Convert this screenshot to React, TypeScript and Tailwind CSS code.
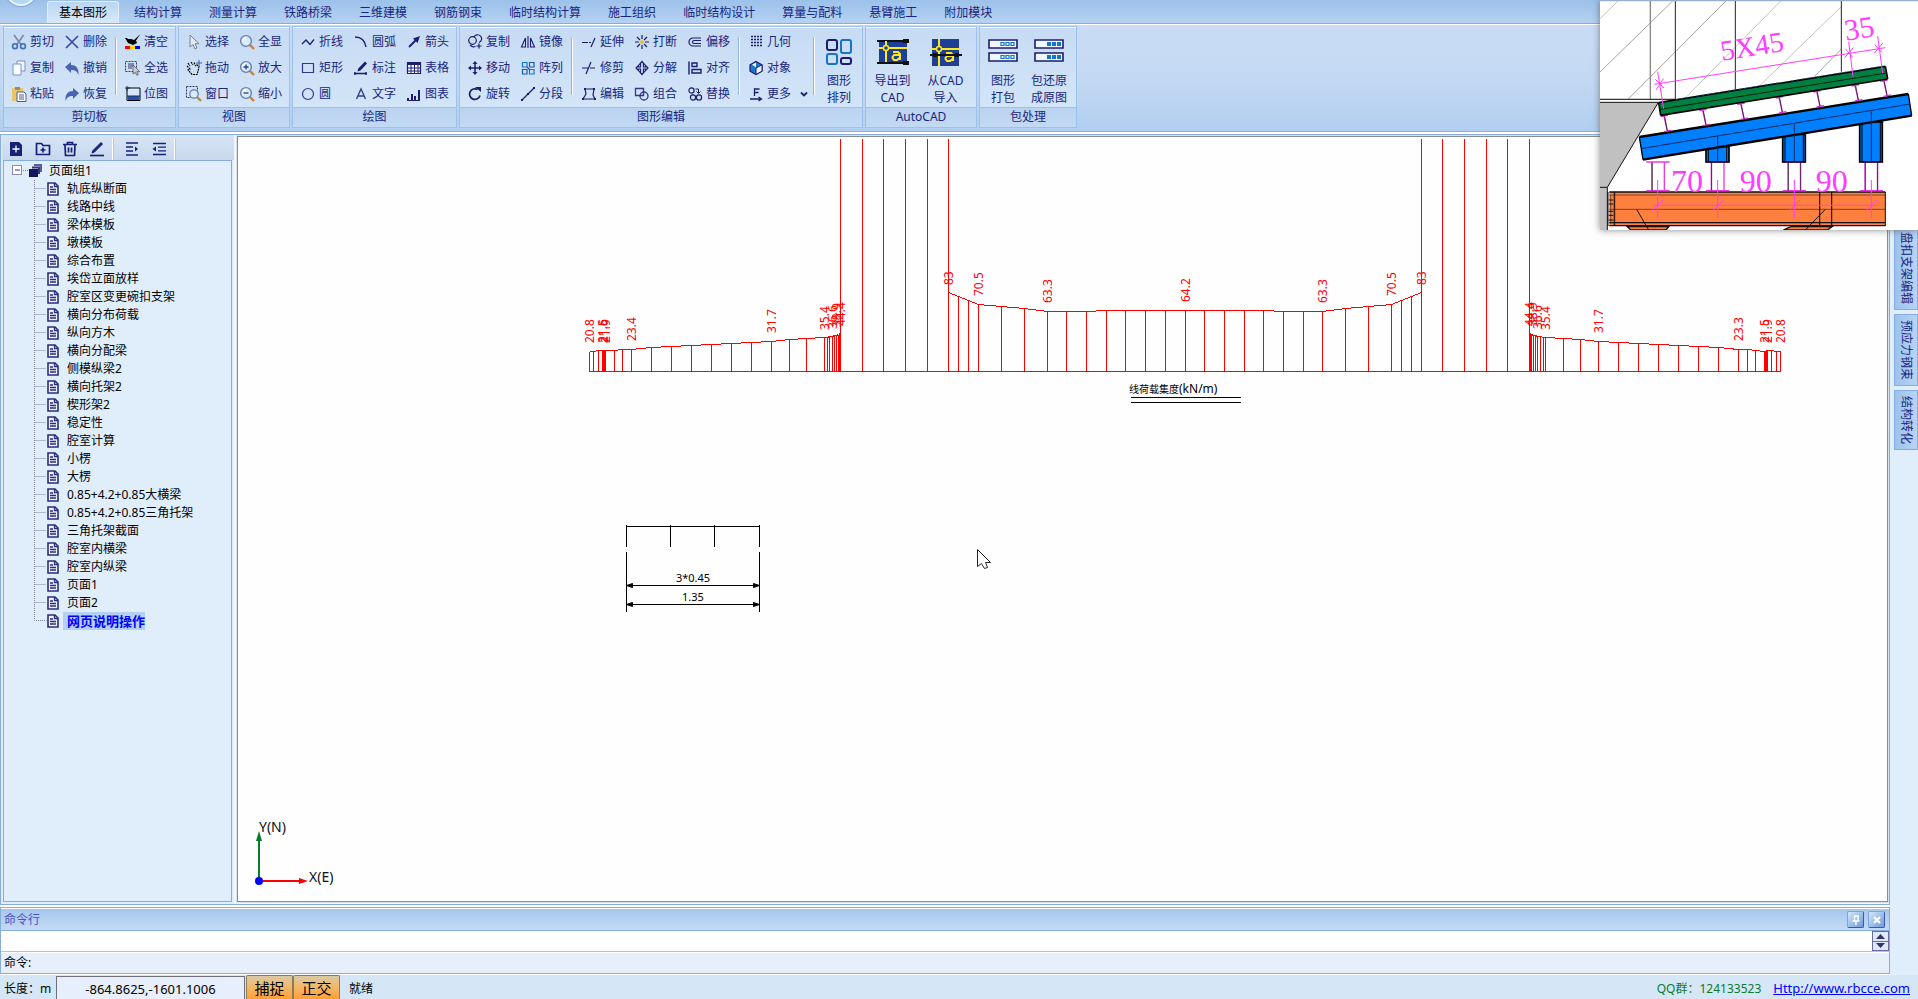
import React from "react";

const NAVY = "#1c1c70";

/* ---------- small 16px icons ---------- */

type IconMap = Record<string, React.ReactNode>;

const lens = (
  <>
    <path d="M11 11l4 4" stroke="#c9813a" strokeWidth="2.4" />
    <circle cx="7" cy="7" r="5.4" stroke="#6a7fb0" strokeWidth="1.4" fill="#d9ecfb" />
    <path d="M4 6.5a3.4 3.4 0 0 1 3-2.8" stroke="#fff" strokeWidth="1.2" />
  </>
);

const ICONS: IconMap = {
  cut: (
    <>
      <path d="M3 1l7 9.5M12.5 1L6 10.5" stroke="#7c8aa8" strokeWidth="1.7" />
      <circle cx="4" cy="12.2" r="2.4" stroke="#3b6fb8" strokeWidth="1.6" />
      <circle cx="12" cy="12.2" r="2.4" stroke="#3b6fb8" strokeWidth="1.6" />
    </>
  ),
  copyDoc: (
    <>
      <path d="M6 1h8v10H6z" fill="#eef5ff" stroke="#7f93c4" />
      <path d="M2 4h8v11H2z" fill="#fbfdff" stroke="#7f93c4" />
    </>
  ),
  paste: (
    <>
      <path d="M1 2h11v13H1z" fill="#e9c766" />
      <path d="M4 1h5v3H4z" fill="#8c8c8c" />
      <path d="M6 6h7l2 2v7.5H6z" fill="#fff" stroke="#4c5a9c" />
      <path d="M8 9h5M8 11h5M8 13h5" stroke="#4c5a9c" />
    </>
  ),
  del: <path d="M2 2l12 12M14 2L2 14" stroke="#34499c" strokeWidth="1.6" />,
  undo: <path d="M1 7l6-5v3c5 0 8 3 7.5 10-1.5-4-3.5-5-7.5-5v3z" fill="#4a64b4" />,
  redo: <path d="M15 7L9 2v3C4 5 1 8 1.5 15 3 11 5 10 9 10v3z" fill="#4a64b4" />,
  clear: (
    <>
      <path d="M15.5 0l-4.5 6.5 1 2.5-4 2-5-2-3-5h2l1 1h3l3 1z" fill="#000" />
      <path d="M0 12h5v3H0z" fill="#f00" />
      <path d="M5 11.5h5V15H5z" fill="#fd0" />
      <path d="M10 12h5v3h-5z" fill="#00f" />
    </>
  ),
  selectAll: (
    <>
      <path d="M.5 1.5h11v10H.5z" stroke="#34346e" strokeDasharray="2 1" />
      <path d="M3 4h6M3 6h6M3 8h4" stroke="#34346e" />
      <path d="M8 5v9l2.200-1.7 1.6 3 1.5-.8-1.5-2.800h3z" fill="#ccd" stroke="#555" strokeWidth=".8" />
    </>
  ),
  bitmap: (
    <>
      <path d="M2 2h13v12.5H2z" fill="#d7e7f9" stroke="#000" />
      <path d="M2.5 10h12v4h-12z" fill="#2653a8" />
      <path d="M0 2h5M2 0v5M2 10h13" stroke="#15305f" />
    </>
  ),
  pick: <path d="M4 1v12l3-2.5 2 4.5 2-1-2-4.300h4z" fill="#e4ebf6" stroke="#7a7f98" />,
  pan: (
    <>
      <path
        d="M2 3l2 3M5 2l2 3M8 2.5l1.5 3M1 6l3 3-2 1 4 4.5h5l1-3 1-5-2-1.5-2 1"
        stroke="#000"
        strokeWidth="1.2"
        strokeDasharray="2 .7"
      />
      <path d="M13 0v6M10 3h6" stroke="#3a5ca8" />
    </>
  ),
  zoomWin: (
    <>
      <path d="M.5 .5h11v11H.5z" stroke="#34346e" strokeDasharray="2 1" />
      <path d="M11 11l4 4" stroke="#c9813a" strokeWidth="2.4" />
      <circle cx="8" cy="8" r="4.2" stroke="#6a7fb0" strokeWidth="1.3" fill="#d9ecfb" />
    </>
  ),
  zoomAll: lens,
  zoomIn: (
    <>
      {lens}
      <path d="M4.5 7h5M7 4.5v5" stroke="#24408c" strokeWidth="1.3" />
    </>
  ),
  zoomOut: (
    <>
      {lens}
      <path d="M4.5 7h5" stroke="#24408c" strokeWidth="1.3" />
    </>
  ),
  polyline: <path d="M2 10l4-4 4 4.5 4-5" stroke={NAVY} strokeWidth="1.3" />,
  rect: <path d="M2.5 3.5h11v9h-11z" stroke="#35358a" strokeWidth="1.2" />,
  circle: <circle cx="8" cy="8" r="5.5" stroke="#35358a" strokeWidth="1.2" />,
  arc: <path d="M2 3c6 0 10 4 11 10" stroke={NAVY} strokeWidth="1.4" />,
  mark: (
    <>
      <path d="M12 1.5l2 2-6.5 7-3 1 .8-3z" fill={NAVY} />
      <path d="M1 13.5h13M2 12v3M13 12v3" stroke={NAVY} strokeWidth="1.3" />
    </>
  ),
  letterA: <path d="M3.5 13L8 3l4.5 10M5 10h6" stroke="#35408c" strokeWidth="1.4" />,
  arrow: (
    <>
      <path d="M3 13l7-7" stroke={NAVY} strokeWidth="1.8" />
      <path d="M14 2l-7 2.5L11.5 9z" fill={NAVY} />
    </>
  ),
  table: (
    <>
      <path d="M1.5 2.5h13v11h-13z" fill="#fff" stroke={NAVY} strokeWidth="1.2" />
      <path d="M1 2h14v3H1z" fill={NAVY} />
      <path d="M5 5v9M8.5 5v9M12 5v9M1 8h14M1 11h14" stroke={NAVY} />
    </>
  ),
  bars: <path d="M1 12h2v2H1zM5 8h2v6H5zM8 10h2v4H8zM12 4h2v10h-2zM1 14h13v1H1z" fill={NAVY} />,
  copyC: (
    <>
      <circle cx="5.5" cy="6.5" r="3.8" stroke={NAVY} strokeWidth="1.2" />
      <path d="M7 3a4 4 0 1 1 5 5.5M9.5 12h5M12 9.5v5M3 11c2 2 4 2 5.5 1.5" stroke={NAVY} strokeWidth="1.2" />
    </>
  ),
  move: (
    <>
      <path d="M8 2v12M2 8h12" stroke={NAVY} strokeWidth="1.5" />
      <path d="M8 1l2.500 3h-5zM8 15l2.500-3h-5zM1 8l3-2.500v5zM15 8l-3-2.500v5z" fill={NAVY} />
    </>
  ),
  rotate: (
    <>
      <path d="M10.5 3.5A5.3 5.3 0 1 0 13 9.5" stroke={NAVY} strokeWidth="1.7" />
      <path d="M8 1h6v5z" fill={NAVY} />
    </>
  ),
  mirror: <path d="M5.5 4v9H1.5zM10.5 4v9h4zM8 2v12" stroke={NAVY} strokeWidth="1.1" />,
  array: (
    <>
      <path d="M2.5 2.5h4.5v4.5h-4.5zM9.5 9.5H14V14H9.5z" stroke="#1976c8" strokeWidth="1.2" />
      <path d="M9.5 2.5H14V7H9.5zM2.5 9.5H7V14H2.5zM7 7l3 3" stroke="#1a5aa8" strokeWidth="1.2" />
    </>
  ),
  segment: (
    <>
      <path d="M2 14L14 2" stroke={NAVY} strokeWidth="1.3" />
      <path d="M1 13h2v2H1zM7 7h2v2H7zM13 1h2v2h-2z" fill={NAVY} />
    </>
  ),
  extend: <path d="M1 8.5h6M8 8.5h2M10 13l4-9" stroke={NAVY} strokeWidth="1.2" />,
  trim: <path d="M1 8h6M9 8h5M5 14L10 2" stroke={NAVY} strokeWidth="1.2" />,
  edit: (
    <>
      <path d="M4 3h9l-1 6 2 4H2l3-5z" stroke={NAVY} strokeWidth="1.2" />
      <path d="M3 2h2v2H3zM12 2h2v2h-2zM1 12h2v2H1zM13 12h2v2h-2z" fill={NAVY} />
    </>
  ),
  brk: (
    <>
      <path d="M8 1v4M8 11v4M1 8h4M11 8h4M3 3l3 3M13 3l-3 3M3 13l3-3M13 13l-3-3" stroke={NAVY} strokeWidth="1.2" />
      <circle cx="8" cy="8" r="1.8" fill="#f5b800" />
    </>
  ),
  explode: (
    <path
      d="M8 1.5l2.500 3H9.5V7h2V5.500l2.500 2.500-2.500 2.500V9h-2v2.500h1L8 14.500l-2.500-3h1V9h-2v1.500L2 8l2.500-2.500V7h2V4.500h-1z"
      stroke={NAVY}
      strokeWidth="1.2"
    />
  ),
  combine: (
    <>
      <path d="M1.5 2.5h8v7h-8z" stroke="#35358a" strokeWidth="1.3" />
      <circle cx="10" cy="10" r="4" stroke="#35358a" strokeWidth="1.3" />
    </>
  ),
  offset: <path d="M14 4H6a4 4 0 0 0 0 8h8M14 6.500H7a1.5 1.5 0 0 0 0 3h7" stroke={NAVY} strokeWidth="1.2" />,
  align: <path d="M2 1.5v13M5 3h5v3.5H5zM5 9.5h9V13H5z" stroke={NAVY} strokeWidth="1.4" />,
  replace: (
    <>
      <circle cx="4.5" cy="4.5" r="2.6" stroke={NAVY} strokeWidth="1.2" />
      <circle cx="6" cy="11.5" r="2.6" stroke={NAVY} strokeWidth="1.2" />
      <circle cx="12" cy="11.5" r="2.6" stroke={NAVY} strokeWidth="1.2" />
      <path d="M8.5 3h3v4M9.5 5.5l2 2 2-2" stroke={NAVY} />
    </>
  ),
  geometry: (
    <path
      d="M3 2.5h11M3 5.5h2M6 5.5h2M9 5.5h2M12 5.5h2M3 8.500h2M6 8.500h2M9 8.500h2M12 8.500h2M3 11.500h2M6 11.500h2M9 11.500h2M12 11.500h2"
      stroke={NAVY}
      strokeWidth="1.4"
      strokeDasharray="2 1"
    />
  ),
  object: (
    <>
      <path d="M8 1.5l6 3.300v6.400l-6 3.300-6-3.300V4.800z" fill="#1a78cc" stroke={NAVY} strokeWidth="1.2" />
      <path d="M8 8l6-3.200v6.400l-6 3.300z" fill="#e9f4ff" stroke={NAVY} />
      <path d="M4 4.500L8 2.500v5z" fill="#e9f4ff" />
    </>
  ),
  more: <path d="M6.5 10V3h5M6.5 6.5h4M2 13h11M10.5 11l3 2-3 2" stroke={NAVY} strokeWidth="1.3" />,
};

function Icon({ name }: { name: string }) {
  return (
    <svg className="size-4 shrink-0" viewBox="0 0 16 16" fill="none" aria-hidden="true">
      {ICONS[name]}
    </svg>
  );
}

/* ---------- ribbon ---------- */

type Item = [icon: string, label: string];

function ToolColumn({ items, wide }: { items: Item[]; wide?: boolean }) {
  return (
    <div className={wide ? "flex w-[67px] flex-col" : "flex w-[53px] flex-col"}>
      {items.map(([icon, label]) => (
        <button key={label} type="button" className="flex h-[26px] items-center gap-[3px] pl-[7px] text-left">
          <Icon name={icon} />
          <span className="whitespace-nowrap">{label}</span>
          {label === "更多" && (
            <svg className="ml-[6px] h-2 w-2 shrink-0" viewBox="0 0 8 8" fill="none" aria-hidden="true">
              <path d="M1 2.5L4 5.5l3-3" stroke={NAVY} strokeWidth="1.8" />
            </svg>
          )}
        </button>
      ))}
    </div>
  );
}

function Divider() {
  return (
    <div className="flex w-2 justify-center pt-2 pb-3 pl-[3px]">
      <span className="w-[2px] border-l border-[#8fb4e4] bg-white" />
    </div>
  );
}

function BigButton({ lines, wide, children }: { lines: [string, string]; wide?: boolean; children: React.ReactNode }) {
  return (
    <button
      type="button"
      className={wide ? "flex w-[53px] flex-col items-center pt-[7px]" : "flex w-[46px] flex-col items-center pt-[7px]"}
    >
      <svg className="h-8 w-8" viewBox="0 0 32 32" fill="none" aria-hidden="true">
        {children}
      </svg>
      <span className="mt-1 whitespace-nowrap leading-[17px]">
        {lines[0]}
        <br />
        {lines[1]}
      </span>
    </button>
  );
}

function Group({ title, children, padded = true }: { title: string; children: React.ReactNode; padded?: boolean }) {
  return (
    <section
      aria-label={title}
      className="flex shrink-0 flex-col border border-[#9dc0ec] bg-linear-to-b from-[#c6dbf4] to-[#d6e7f8]"
    >
      <div className={padded ? "flex h-[81px] border-t border-white pt-[1px] pr-1" : "flex h-[81px] border-t border-white pt-[1px]"}>
        {children}
      </div>
      <h2 className="h-5 border-t border-[#9dc0ec] bg-linear-to-b from-[#bad3f0] to-[#c2daf4] text-center leading-[18px]">
        {title}
      </h2>
    </section>
  );
}

const TABS = [
  "基本图形", "结构计算", "测量计算", "铁路桥梁", "三维建模", "钢筋钢束", "临时结构计算",
  "施工组织", "临时结构设计", "算量与配料", "悬臂施工", "附加模块",
];

function Ribbon() {
  return (
    <header className="text-[#18267e]">
      <nav className="relative flex h-6 items-end gap-[3px] overflow-hidden border-b border-[#86ade0] bg-linear-to-b from-[#9cc1ea] to-[#b5d2f1] pl-[47px]">
        <span className="absolute -top-[26px] left-[5px] size-8 rounded-full border-2 border-[#e8f4ff] bg-[#b7d8f3] shadow-[0_0_1px_1px_#7fa8d8]" />
        {TABS.map((t, i) => (
          <button
            key={t}
            type="button"
            className={
              i === 0
                ? "h-[22px] rounded-t-[3px] border border-b-0 border-[#e4effb] bg-linear-to-b from-[#b9d6f3] to-[#d9e9fa] px-[11px] leading-[22px] text-black"
                : "h-[22px] px-3 leading-[24px]"
            }
          >
            {t}
          </button>
        ))}
      </nav>
      <div className="flex h-[108px] gap-[2px] border-t border-b border-t-white border-b-[#86ade0] bg-linear-to-b from-[#cadcf5] via-[#c3d9f3] to-[#b2ceef] pt-[1px] pb-[3px] pl-[3px]">
        <Group title="剪切板">
          <ToolColumn items={[["cut", "剪切"], ["copyDoc", "复制"], ["paste", "粘贴"]]} />
          <ToolColumn items={[["del", "删除"], ["undo", "撤销"], ["redo", "恢复"]]} />
          <Divider />
          <ToolColumn items={[["clear", "清空"], ["selectAll", "全选"], ["bitmap", "位图"]]} />
        </Group>
        <Group title="视图">
          <ToolColumn items={[["pick", "选择"], ["pan", "拖动"], ["zoomWin", "窗口"]]} />
          <ToolColumn items={[["zoomAll", "全显"], ["zoomIn", "放大"], ["zoomOut", "缩小"]]} />
        </Group>
        <Group title="绘图">
          <ToolColumn items={[["polyline", "折线"], ["rect", "矩形"], ["circle", "圆"]]} />
          <ToolColumn items={[["arc", "圆弧"], ["mark", "标注"], ["letterA", "文字"]]} />
          <ToolColumn items={[["arrow", "箭头"], ["table", "表格"], ["bars", "图表"]]} />
        </Group>
        <Group title="图形编辑" padded={false}>
          <ToolColumn items={[["copyC", "复制"], ["move", "移动"], ["rotate", "旋转"]]} />
          <ToolColumn items={[["mirror", "镜像"], ["array", "阵列"], ["segment", "分段"]]} />
          <Divider />
          <ToolColumn items={[["extend", "延伸"], ["trim", "修剪"], ["edit", "编辑"]]} />
          <ToolColumn items={[["brk", "打断"], ["explode", "分解"], ["combine", "组合"]]} />
          <ToolColumn items={[["offset", "偏移"], ["align", "对齐"], ["replace", "替换"]]} />
          <Divider />
          <ToolColumn wide items={[["geometry", "几何"], ["object", "对象"], ["more", "更多"]]} />
          <Divider />
          <BigButton lines={["图形", "排列"]}>
            <rect x="4" y="4" width="10" height="10" rx="2" stroke={NAVY} strokeWidth="2" />
            <rect x="18" y="4" width="10" height="13" rx="2" stroke="#1673c6" strokeWidth="2" />
            <rect x="4" y="18" width="10" height="10" rx="2" stroke="#1673c6" strokeWidth="2" />
            <rect x="18" y="22" width="10" height="6" rx="2" stroke={NAVY} strokeWidth="2" />
          </BigButton>
        </Group>
        <Group title="AutoCAD">
          <BigButton wide lines={["导出到", "CAD"]}>
            <rect x="2" y="5" width="28" height="22" fill="#1f3f94" />
            <path d="M0 5h28M0 27h28" stroke="#111" strokeWidth="2" />
            <path d="M26 3h6v4h-6zM26 25h6v4h-6z" fill="#111" />
            <path d="M2 12h5M11 12h19M9 5v5M9 14v12" stroke="#ffe81a" strokeWidth="2" />
            <circle cx="9" cy="12" r="2.5" stroke="#ffe81a" strokeWidth="1.5" />
            <path d="M16 16h5l2 2v6M22 19h-5l-1.5 2v1l1.5 2h3l2.5-2" stroke="#ffe81a" strokeWidth="2" />
          </BigButton>
          <BigButton wide lines={["从CAD", "导入"]}>
            <rect x="2" y="3" width="27" height="27" fill="#1f3f94" />
            <path d="M2 13h5M11 13h18M9 3v8M9 15v15" stroke="#ffe81a" strokeWidth="2" />
            <circle cx="9" cy="13" r="2.5" stroke="#ffe81a" strokeWidth="1.5" />
            <path d="M16 17h5l2 2v6M22 20h-5l-1.5 2v1l1.5 2h3l2.5-2" stroke="#ffe81a" strokeWidth="2" />
            <path d="M0 19h32" stroke="#111" strokeWidth="2" />
            <path d="M3 17h4v4H3zM25 17h4v4h-4z" fill="#111" />
          </BigButton>
        </Group>
        <Group title="包处理">
          <BigButton lines={["图形", "打包"]}>
            <path d="M2 4h28v8H2zM2 17h28v8H2z" fill="#eef6ff" stroke={NAVY} strokeWidth="1.6" />
            <path
              d="M14 6.5h3v3h-3zM19 6.5h3v3h-3zM24 6.5h3v3h-3zM14 19.5h3v3h-3zM19 19.5h3v3h-3zM24 19.5h3v3h-3z"
              stroke="#1673c6"
              strokeWidth="1.2"
            />
          </BigButton>
          <BigButton lines={["包还原", "成原图"]}>
            <path d="M2 4h28v8H2zM2 17h28v8H2z" fill="#eef6ff" stroke={NAVY} strokeWidth="1.6" />
            <path
              d="M14 6h4v4h-4zM19 6h4v4h-4zM24 6h4v4h-4zM14 19h4v4h-4zM19 19h4v4h-4zM24 19h4v4h-4z"
              fill="#1673c6"
            />
          </BigButton>
        </Group>
      </div>
    </header>
  );
}

/* ---------- page tree ---------- */

const PAGES = [
  "轨底纵断面", "线路中线", "梁体模板", "墩模板", "综合布置", "埃岱立面放样", "腔室区变更碗扣支架",
  "横向分布荷载", "纵向方木", "横向分配梁", "侧模纵梁2", "横向托架2", "楔形架2", "稳定性", "腔室计算",
  "小楞", "大楞", "0.85+4.2+0.85大横梁", "0.85+4.2+0.85三角托架", "三角托架截面", "腔室内横梁",
  "腔室内纵梁", "页面1", "页面2", "网页说明操作",
];

function PageIcon() {
  return (
    <svg className="h-[14px] w-3 shrink-0" viewBox="0 0 12 14" fill="none" aria-hidden="true">
      <path d="M1 1h7l3 3v9H1z" fill="#eef2fb" stroke="#2c2c7c" strokeWidth="1.6" />
      <path d="M7.5 1v3.5H11M3 5h3M3 7.5h6M3 10h6" stroke="#2c2c7c" strokeWidth="1.3" />
    </svg>
  );
}

function TreeToolButton({ label, children }: { label: string; children: React.ReactNode }) {
  return (
    <button type="button" aria-label={label} className="flex w-[27px] items-center justify-center">
      <svg className="size-4" viewBox="0 0 16 16" fill="none" stroke="#16227a" strokeWidth="1.7" aria-hidden="true">
        {children}
      </svg>
    </button>
  );
}

function PagePanel() {
  return (
    <aside className="flex w-[233px] shrink-0 flex-col bg-[#e0edfb] pl-[1px]">
      <div className="flex h-[25px] items-stretch bg-linear-to-b from-[#d6e4f6] to-[#c8d8ec] pt-[3px]">
        <TreeToolButton label="新建页面">
          <path d="M2 1h9l3 3v11H2z" fill="#16227a" stroke="none" />
          <path d="M8 4.5v7M4.5 8h7" stroke="#fff" strokeWidth="1.3" />
        </TreeToolButton>
        <TreeToolButton label="新建页面组">
          <path d="M1.5 2.5h5l1.5 2h6.5v9h-13zM8 6.5v5M5.5 9h5" />
        </TreeToolButton>
        <TreeToolButton label="删除页面">
          <path d="M1 3.5h14M5.5 3V1.5h5V3M3 4l.5 10.5h9L13 4M6.5 6.5v5M9.5 6.5v5" />
        </TreeToolButton>
        <TreeToolButton label="重命名">
          <path d="M3 12l1-2.5L12 1.5l1.5 1.5-8 8z" fill="#16227a" strokeWidth="1" />
          <path d="M1 14.5h14" />
        </TreeToolButton>
        <span className="mr-1 ml-[2px] w-[2px] border-l border-white bg-[#b4c8e4]" />
        <TreeToolButton label="展开">
          <path d="M2 2h12M2 6h7M2 10h7M2 14h12" />
          <path d="M11 5.5l3 2.5-3 2.5z" fill="#16227a" stroke="none" />
        </TreeToolButton>
        <TreeToolButton label="收起">
          <path d="M2 2.5h13M7 6.2h8M7 9.8h8M2 13.5h13" strokeWidth="1.3" />
          <path d="M5 5.5L1.5 8 5 10.5z" fill="#16227a" stroke="none" />
        </TreeToolButton>
        <span className="ml-[2px] w-[2px] border-l border-white bg-[#b4c8e4]" />
      </div>
      <div className="mr-[2px] mb-[2px] ml-[1px] min-h-0 flex-1 overflow-hidden border border-[#86ade0] bg-[#e0eefc]">
        <div className="flex h-[19px] items-center pt-[1px] pl-2">
          <svg className="h-[18px] w-[31px] shrink-0" viewBox="0 0 31 18" fill="none" aria-hidden="true">
            <rect x=".5" y="3.5" width="9" height="9" fill="#fff" stroke="#8a8ab8" />
            <path d="M3 8h5" stroke="#3a3a9a" />
            <path d="M11 8.5h6" stroke="#8080a0" strokeDasharray="1 1" />
            <path d="M22 2h8v8h-2V4h-6z" fill="#5a5a9e" />
            <path d="M20 4.5h8V12h-2V6.5h-6z" fill="#35357e" />
            <path d="M17 7h9v8h-9z" fill="#15155c" />
          </svg>
          <span className="ml-[6px]">页面组1</span>
        </div>
        <ul className="pl-[30px]">
          {PAGES.map((p, i) => {
            const last = i === PAGES.length - 1;
            return (
              <li key={p} className="flex h-[18px] items-center">
                <svg className="h-[18px] w-[13px] shrink-0" viewBox="0 0 13 18" fill="none" aria-hidden="true">
                  <path d={last ? "M.5 0v8.5h12" : "M.5 0v18M.5 8.5h12"} stroke="#8080a0" strokeDasharray="1 1" />
                </svg>
                <PageIcon />
                <a
                  href="#page"
                  className={
                    last
                      ? "ml-1 h-[18px] bg-[#b3d1f3] pl-1 text-[13px] leading-[18px] font-bold text-[#0000ff]"
                      : "ml-1 h-[18px] pl-1 leading-[18px]"
                  }
                >
                  {p}
                </a>
              </li>
            );
          })}
        </ul>
      </div>
    </aside>
  );
}

/* ---------- drawing ---------- */

const BASE = 371;

const PROFILE_LEFT: [number, number][] = [
  [589, 351], [593, 351], [598, 350], [602, 350], [603, 350], [604, 350], [605, 350], [614, 350], [622, 349],
  [631, 349], [651, 347], [671, 346], [691, 345], [711, 344], [731, 343], [751, 342], [771, 341], [789, 339],
  [806, 338], [824, 337], [827, 337], [829, 336], [832, 336], [834, 335], [836, 335], [838, 334], [839, 333], [840, 332],
];
const PROFILE_MID: [number, number][] = [
  [948, 292], [958, 296], [968, 300], [978, 304], [1001, 306], [1024, 308], [1047, 311], [1066, 311], [1086, 311],
  [1106, 310], [1125, 310], [1145, 310], [1165, 310], [1185, 310], [1204, 310], [1224, 310], [1244, 310],
  [1263, 310], [1283, 311], [1303, 311], [1322, 311], [1345, 308], [1368, 306], [1391, 304], [1401, 300],
  [1411, 296], [1421, 292],
];
const PROFILE_RIGHT: [number, number][] = [
  [1529, 332], [1530, 333], [1531, 334], [1533, 335], [1535, 335], [1537, 336], [1540, 336], [1543, 337], [1545, 337],
  [1563, 338], [1580, 339], [1598, 341], [1618, 342], [1638, 343], [1658, 344], [1678, 345], [1698, 346],
  [1718, 347], [1738, 349], [1747, 349], [1755, 350], [1764, 351], [1765, 351], [1766, 350], [1767, 350],
  [1771, 350], [1776, 351], [1780, 351],
];
const TALL = [840, 862, 883, 905, 927, 948, 1421, 1442, 1464, 1486, 1507, 1529];

const LOADS: [number, number, string][] = [
  [589, 343, "20.8"], [602, 343, "21.5"], [603, 343, "21.6"], [605, 343, "21.9"], [631, 341, "23.4"],
  [771, 333, "31.7"], [824, 330, "35.4"], [832, 329, "36.6"], [836, 327, "38.9"], [840, 326, "44.4"],
  [948, 285, "83"], [978, 296, "70.5"], [1047, 303, "63.3"], [1185, 302, "64.2"], [1322, 303, "63.3"],
  [1391, 296, "70.5"], [1421, 285, "83"], [1529, 326, "44.4"], [1532, 326, "38.9"], [1537, 329, "36.6"],
  [1545, 330, "35.4"], [1598, 333, "31.7"], [1738, 341, "23.3"], [1764, 343, "21.5"], [1767, 343, "21.9"],
  [1780, 343, "20.8"],
];

function Profile({ pts }: { pts: [number, number][] }) {
  return (
    <>
      <polyline points={pts.map((p) => p.join(",")).join(" ")} />
      {pts.map(([x, y]) => (
        <path key={x} d={`M${x} ${y}V${BASE}`} />
      ))}
    </>
  );
}

function Canvas() {
  return (
    <main className="relative mt-[1px] mr-[1px] mb-[2px] ml-[3px] min-w-0 flex-1 overflow-hidden border border-[#8c8c8c] bg-[#fefefe] shadow-[0_0_0_1px_#d8e0ea]">
      <svg className="h-full w-full" fill="none" role="img" aria-label="线荷载集度">
        <g transform="translate(-238 -137)">
          <g transform="translate(.5 .5)">
            <g stroke="#f00" shapeRendering="crispEdges">
              <Profile pts={PROFILE_LEFT} />
              <Profile pts={PROFILE_MID} />
              <Profile pts={PROFILE_RIGHT} />
              <path d={`M589 ${BASE}H1780`} />
              {TALL.map((x) => (
                <path key={x} d={`M${x} 138V${BASE}`} />
              ))}
            </g>
            <g stroke="#000" shapeRendering="crispEdges">
              <path d="M1130 397H1240M1130 402H1240" />
              <path d="M626 526H759M626 524V546M670 524V546M714 524V546M759 524V546" />
              <path d="M626 551V611M759 551V611M626 585H759M626 604H759" />
            </g>
            <path
              d="M626 585l6-2v4zM759 585l-6-2v4zM626 604l6-2v4zM759 604l-6-2v4z"
              fill="#000"
              stroke="#000"
            />
            <path d="M977 549v17l4-3 3 5 3-1-2-5h5z" fill="#fff" stroke="#222" />
          </g>
          <g fill="#f00" fontSize="12">
            {LOADS.map(([x, y, t]) => (
              <text key={x} transform={`translate(${x + 5} ${y}) rotate(-90)`}>
                {t}
              </text>
            ))}
          </g>
          <g fill="#000">
            <text x="1129" y="393" fontSize="10">
              线荷载集度<tspan fontSize="12">(kN/m)</tspan>
            </text>
            <text x="693" y="582" fontSize="11" textAnchor="middle">3*0.45</text>
            <text x="693" y="601" fontSize="11" textAnchor="middle">1.35</text>
          </g>
        </g>
      </svg>
      <svg className="absolute bottom-0 left-0 h-[90px] w-[120px]" viewBox="0 0 120 90" fill="none" aria-hidden="true">
        <path d="M21 70V28" stroke="#0a7a2c" strokeWidth="2" />
        <path d="M21 20l3 10h-6z" fill="#0a7a2c" />
        <path d="M21 70h42" stroke="#f00" strokeWidth="2" />
        <path d="M70 70l-9-3v6z" fill="#f00" />
        <circle cx="21" cy="70" r="4" fill="#00f" />
        <text x="21" y="21" fontSize="14" fill="#111">Y(N)</text>
        <text x="71" y="71" fontSize="14" fill="#111">X(E)</text>
      </svg>
    </main>
  );
}

/* ---------- floating detail picture ---------- */

function Stub({ x }: { x: number }) {
  return (
    <path
      d={`M${x - 35} 486h70M${x - 35} 572h70M${x - 19} 488v84M${x + 19} 488v84`}
      stroke="#e83ae8"
      strokeWidth="4"
    />
  );
}

function Detail() {
  const rungs: [number, number][] = [
    [222, 348], [338, 330], [452, 311], [567, 292], [680, 274], [795, 256], [881, 242],
  ];
  return (
    <figure className="absolute top-0 right-0 h-[230px] w-[318px] overflow-hidden bg-white shadow-[0_0_7px_rgba(60,60,60,0.6)]">
      <svg className="h-full w-full" viewBox="30 0 954 690" fill="none" role="img" aria-label="支架大样">
        <path d="M30 216L248 3M114 298L408 3" stroke="#777" strokeWidth="2" />
        <path d="M285 295L572 3M30 56L84 3M500 266L754 20" stroke="#c4c4c4" strokeWidth="3" />
        <path d="M675 228L754 147" stroke="#777" strokeWidth="2" />
        <path d="M181 3V298" stroke="#888" strokeWidth="4" />
        <path d="M256 3V298M436 3V268M754 3V215" stroke="#222" strokeWidth="3" />
        <path d="M30 298H256" stroke="#333" strokeWidth="4" />
        <path d="M30 307H205L52 562V690H30z" fill="#c0c0c0" />
        <path d="M30 307H205L52 562M30 562H52V690" stroke="#111" strokeWidth="3" />

        <path d="M58 576H886V678H58z" fill="#ff7f3f" />
        <path d="M58 576H886M58 668H886M58 677H886" stroke="#111" strokeWidth="4" />
        <path d="M58 585H886M58 628H886M72 576V678M62 585V672M689 576V678M725 576V678" stroke="#4a2414" strokeWidth="2" />
        <path d="M54 576v102M74 576v102M689 576v102M725 576v102M886 576v102" stroke="#111" strokeWidth="3" />
        <path d="M56 600h14M56 612h14M56 634h14M56 646h14M56 660h14" stroke="#111" strokeWidth="3" />
        <path d="M112 680H236L228 690H122zM602 680H726L712 690H580z" fill="#ff7f3f" stroke="#111" strokeWidth="4" />
        <path d="M140 628L176 690M706 628L646 690" stroke="#111" strokeWidth="3" />

        <Stub x={204} />
        <Stub x={383} />
        <Stub x={613} />
        <Stub x={844} />
        <path d="M187 488v84M365 488v84M595 488v84M631 488v84M826 488v84M862 488v84" stroke="#111" strokeWidth="2" />

        <path d="M348 440h69v46h-69zM578 403h68v83h-68zM809 366h68v120h-68z" fill="#0080ff" stroke="#000" strokeWidth="5" />
        <path d="M355 440v46M410 440v46M585 403v83M640 403v83M816 366v120M871 366v120" stroke="#000" strokeWidth="3" />
        <path d="M148 411L955 282L965 347L159 479z" fill="#0080ff" />
        <path d="M148 411L955 282M965 347L159 479" stroke="#000" strokeWidth="7" />
        <path d="M148 411l11 68M955 282l10 65" stroke="#000" strokeWidth="4" />
        <path d="M153 446L960 312M383 406v80M613 370v116M844 334v152" stroke="#0a2a60" strokeWidth="3" />

        {rungs.map(([x, y]) => (
          <path key={x} d={`M${x} ${y}l10 45M${x - 10} ${y + 2}l22-4M${x} ${y + 47}l22-4`} stroke="#d632d6" strokeWidth="4" />
        ))}
        {rungs.map(([x, y]) => (
          <path key={x} d={`M${x + 2} ${y + 2}l8 42`} stroke="#111" strokeWidth="2" />
        ))}

        <path d="M206 308L886 199L893 237L212 346z" fill="#008040" />
        <path d="M206 308L886 199M893 237L212 346M206 308l6 38M886 199l7 38" stroke="#000" strokeWidth="5" />
        <path d="M256 299L886 197" stroke="#1a60b0" strokeWidth="2" strokeDasharray="8 8" />
        <path d="M210 328L890 219" stroke="#021" strokeWidth="3" />

        <g stroke="#ff3cff" strokeWidth="3">
          <path d="M193 253L886 143M203 215L221 326M776 125L789 230M863 108L878 220" />
          <path d="M198 270L220 236M196 238L222 264M764 173L790 143M766 146L788 172M852 160L878 130M854 134L876 158" />
          <path d="M188 616H862M203 540V654M383 540V654M613 540V654M844 540V654" />
          <path d="M186 632L220 600M368 632L400 600M597 632L630 600M828 632L860 600" />
        </g>
        <g fill="#ff3cff" fontSize="96" className="font-[Liberation_Serif,serif]">
          <text x="243" y="577">70</text>
          <text x="449" y="577">90</text>
          <text x="677" y="577">90</text>
          <text transform="translate(396 182) rotate(-9)" fontSize="86">5X45</text>
          <text transform="translate(768 122) rotate(-9)" fontSize="90">35</text>
        </g>
        <path d="M30 2H984" stroke="#7f9fc8" strokeWidth="3" />
      </svg>
    </figure>
  );
}

/* ---------- command dock and status bar ---------- */

function CommandDock() {
  const dockButton =
    "flex size-[17px] items-center justify-center rounded-[2px] border border-[#7fa3dc] border-r-[#3f57a8] border-b-[#3f57a8] bg-linear-to-br from-[#d3e8fb] to-[#6d9bd8]";
  return (
    <section aria-label="命令行" className="mt-[2px] border border-[#86ade0] bg-[#e7effb]">
      <div className="flex h-[22px] items-center border-t border-white bg-linear-to-b from-[#a6c7ee] to-[#c4daf5] pr-1 pl-[3px]">
        <h2 className="flex-1 text-[#4a50bc]">命令行</h2>
        <div className="flex gap-1">
          <button type="button" aria-label="固定" className={dockButton}>
            <svg className="size-3" viewBox="0 0 12 12" fill="none" stroke="#fff" strokeWidth="1.4" aria-hidden="true">
              <path d="M4 2h5M4.5 2v5M8 2v5M2.5 7h7M6 7v4" />
            </svg>
          </button>
          <button type="button" aria-label="关闭" className={dockButton}>
            <svg className="size-3" viewBox="0 0 12 12" fill="none" stroke="#fff" strokeWidth="2.2" aria-hidden="true">
              <path d="M3 3l6 6M9 3l-6 6" />
            </svg>
          </button>
        </div>
      </div>
      <div className="flex h-[22px] border-t border-b border-t-[#86ade0] border-b-[#a9c5e8] bg-white">
        <textarea readOnly aria-label="命令记录" className="min-w-0 flex-1 resize-none outline-none" rows={1} />
        <div className="flex w-[17px] flex-col gap-[1px] bg-[#6a6aa8] p-px">
          <button type="button" aria-label="上移" className="flex flex-1 items-center justify-center bg-[#dfe8f8]">
            <svg className="h-[5px] w-[9px]" viewBox="0 0 9 5" aria-hidden="true"><path d="M0 5h9L4.5 0z" fill="#333366" /></svg>
          </button>
          <button type="button" aria-label="下移" className="flex flex-1 items-center justify-center bg-[#dfe8f8]">
            <svg className="h-[5px] w-[9px]" viewBox="0 0 9 5" aria-hidden="true"><path d="M0 0h9L4.5 5z" fill="#333366" /></svg>
          </button>
        </div>
      </div>
      <div className="flex h-[21px] items-center border-t border-white pl-[3px]">
        <label htmlFor="cmd">命令:</label>
        <input id="cmd" className="ml-1 min-w-0 flex-1 bg-transparent outline-none" />
      </div>
    </section>
  );
}

function StatusBar() {
  const toggle =
    "h-6 w-[47px] rounded-t-[2px] border border-[#8c7a58] border-b-0 bg-linear-to-b from-[#d9c9a4] via-[#f3b765] via-50% to-[#ff9f30] text-[15px] leading-[22px] text-black";
  return (
    <footer className="flex h-6 items-stretch bg-[#d5e6f6]">
      <span className="w-14 pl-1 leading-[28px] whitespace-nowrap">长度：m</span>
      <output className="mt-[1px] w-[189px] border-t border-r border-l border-[#707078] bg-[#e6effb] text-center text-[13px] leading-[25px]">
        -864.8625,-1601.1006
      </output>
      <div className="ml-[1px] flex">
        <button type="button" className={toggle}>捕捉</button>
        <button type="button" className={toggle}>正交</button>
      </div>
      <span className="ml-[9px] leading-[28px]">就绪</span>
      <span className="ml-auto leading-[28px] text-[#0a7a2c]">QQ群：124133523</span>
      <a href="#home" className="mr-2 ml-3 text-[13px] leading-[27px] text-[#0000ff] underline">
        Http://www.rbcce.com
      </a>
    </footer>
  );
}

export default function App() {
  return (
    <div className="relative flex h-screen flex-col overflow-hidden bg-white font-['Noto_Sans','Noto_Sans_CJK_SC',sans-serif] text-[12px] leading-[16px] text-black">
      <Ribbon />
      <div className="mt-[2px] flex min-h-0 flex-1">
        <div className="flex min-w-0 flex-1 flex-col pb-[1px]">
          <div className="flex min-h-0 flex-1 border border-[#86ade0] bg-[#f2f7fd]">
            <PagePanel />
            <Canvas />
          </div>
          <CommandDock />
        </div>
        <nav className="flex w-7 shrink-0 flex-col items-end gap-1 bg-[#e0eefc] pt-[92px]" aria-label="侧边面板">
          {["盘扣支架编辑", "预应力钢束", "结构转化"].map((t) => (
            <button
              key={t}
              type="button"
              className="w-6 border border-[#86ade0] bg-linear-to-r from-[#9cc2ec] to-[#b9d4f3] pt-[5px] pb-[5px] leading-[22px] text-[#18267e] [text-orientation:sideways] [writing-mode:vertical-rl]"
            >
              {t}
            </button>
          ))}
        </nav>
      </div>
      <StatusBar />
      <Detail />
    </div>
  );
}
